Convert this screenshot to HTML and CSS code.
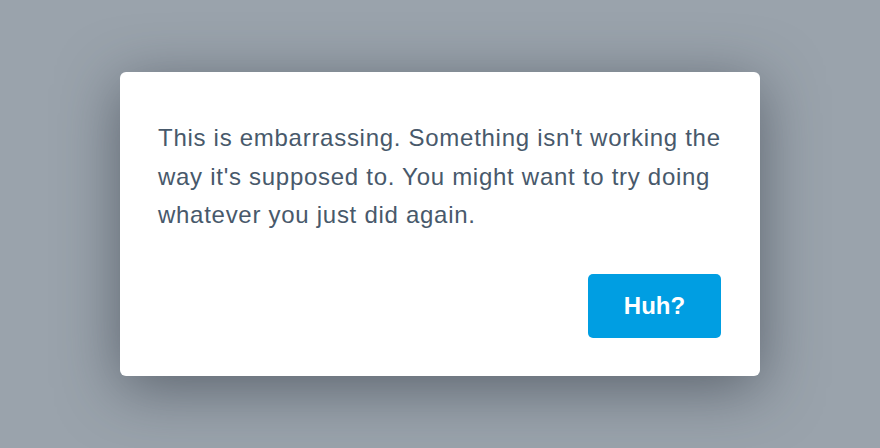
FILE: index.html
```html
<!DOCTYPE html>
<html lang="en">
<head>
  <meta charset="UTF-8">
  <meta name="viewport" content="width=device-width, initial-scale=1.0">
  <title>Error</title>
  <link rel="stylesheet" href="styles.css">
</head>
<body>
  <div class="dialog">
    <p class="message">This is embarrassing. Something isn't working the way it's supposed to. You might want to try doing whatever you just did again.</p>
    <div class="actions">
      <button type="button" class="btn">Huh?</button>
    </div>
  </div>
</body>
</html>
```

FILE: styles.css
```css
html, body {
  height: 100%;
}

body {
  margin: 0;
  background: #9aa3ac;
  font-family: "Liberation Sans", Arial, sans-serif;
  display: flex;
  align-items: center;
  justify-content: center;
}

.dialog {
  width: 640px;
  height: 304px;
  box-sizing: border-box;
  padding: 47px 39px 38px 38px;
  background: #fff;
  border-radius: 6px;
  box-shadow: 0 12px 60px rgba(40, 48, 58, 0.55);
  display: flex;
  flex-direction: column;
}

.message {
  margin: 0;
  color: #48596b;
  font-size: 24px;
  line-height: 38.5px;
  letter-spacing: 0.72px;
}

.actions {
  margin-top: auto;
  display: flex;
  justify-content: flex-end;
}

.btn {
  width: 133px;
  height: 64px;
  border: none;
  border-radius: 5px;
  background: #009ee2;
  color: #fff;
  font-family: inherit;
  font-size: 24px;
  font-weight: bold;
  cursor: pointer;
}
```
